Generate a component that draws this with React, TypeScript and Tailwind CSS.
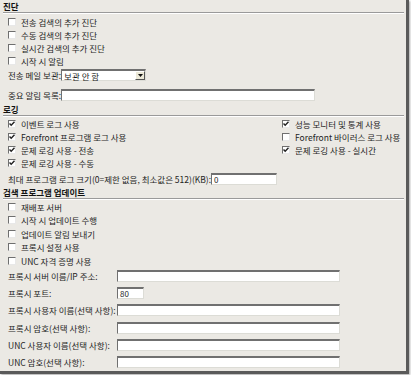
import React from 'react';

const font = { fontFamily: '"Noto Sans CJK KR", "Noto Sans", sans-serif' };

function Check({ checked }: { checked?: boolean }) {
  return (
    <span className="inline-flex w-[8px] h-[8px] shrink-0 bg-white border-t border-l border-[#6f6f6f] border-r border-b border-r-[#e8e8e8] border-b-[#e8e8e8] items-center justify-center">
      {checked && (
        <svg width="6" height="6" viewBox="0 0 6 6">
          <path d="M0.5 2.5 L2.2 4.3 L5.5 0.8" stroke="#222" strokeWidth="1.4" fill="none" />
        </svg>
      )}
    </span>
  );
}

function CheckRow({ label, checked, h = 'h-[13px]' }: { label: string; checked?: boolean; h?: string }) {
  return (
    <div className={`flex items-center gap-[5px] ${h}`}>
      <Check checked={checked} />
      <span className="whitespace-nowrap">{label}</span>
    </div>
  );
}

function Field({ w, value }: { w: string; value?: string }) {
  return (
    <div className={`${w} h-[12px] shrink-0 bg-white border-t-2 border-l border-[#707070] border-r border-b border-r-[#dcdcd6] border-b-[#dcdcd6] flex items-center pl-[2px] text-[8px]`}>
      {value}
    </div>
  );
}

function Header({ title }: { title: string }) {
  return (
    <div className="pl-[3px] pr-[2px]">
      <div className="font-bold text-[8.5px] h-[11px] flex items-center text-[#111]">{title}</div>
      <div className="h-[2px] border-t border-[#9a9a9a] border-b border-b-white mt-[1px]" />
    </div>
  );
}

function FormRow({ label, w = 'w-[223px]', value }: { label: string; w?: string; value?: string }) {
  return (
    <div className="flex items-center h-[17.2px]">
      <span className="w-[109px] whitespace-nowrap">{label}</span>
      <Field w={w} value={value} />
    </div>
  );
}

export default function App() {
  return (
    <div className="w-[411px] h-[375px] bg-white" style={font}>
      <div className="w-[409px] h-[374px] bg-[#ebe9e4] border-r-[3px] border-b-[3px] border-[#5a5a5a] shadow-[1px_1px_2px_rgba(0,0,0,0.35)] text-[8.5px] leading-[10px] text-[#1e1e1e] overflow-hidden">
        {/* 진단 */}
        <Header title="진단" />
        <div className="pl-[8px] pt-[1px]">
          <CheckRow label="전송 검색의 추가 진단" />
          <CheckRow label="수동 검색의 추가 진단" />
          <CheckRow label="실시간 검색의 추가 진단" />
          <CheckRow label="시작 시 알림" />
          <div className="flex items-center h-[16px]">
            <span className="whitespace-nowrap">전송 메일 보관:</span>
            <div className="w-[85px] h-[12px] bg-white border-t-2 border-l border-[#707070] border-r border-b border-r-[#dcdcd6] border-b-[#dcdcd6] flex items-center justify-between pl-[2px]">
              <span>보관 안 함</span>
              <span className="w-[10px] h-[9px] bg-[#ece9d8] border border-t-white border-l-white border-r-[#555] border-b-[#555] flex items-center justify-center">
                <svg width="5" height="3" viewBox="0 0 5 3">
                  <path d="M0 0 H5 L2.5 3 Z" fill="#111" />
                </svg>
              </span>
            </div>
          </div>
          <div className="flex items-center h-[20px] pt-[4px]">
            <span className="whitespace-nowrap">중요 알림 목록:</span>
            <Field w="w-[254px]" />
          </div>
        </div>

        {/* 로깅 */}
        <Header title="로깅" />
        <div className="pl-[8px] grid grid-cols-[274px_1fr]">
          <div>
            <CheckRow label="이벤트 로그 사용" checked />
            <CheckRow label="Forefront 프로그램 로그 사용" checked />
            <CheckRow label="문제 로깅 사용 - 전송" checked />
            <CheckRow label="문제 로깅 사용 - 수동" checked />
          </div>
          <div>
            <CheckRow label="성능 모니터 및 통계 사용" checked />
            <CheckRow label="Forefront 바이러스 로그 사용" />
            <CheckRow label="문제 로깅 사용 - 실시간" checked />
          </div>
        </div>
        <div className="pl-[8px] flex items-center h-[17px] pt-[3px]">
          <span className="whitespace-nowrap">최대 프로그램 로그 크기(0=제한 없음, 최소값은 512)(KB):</span>
          <Field w="w-[66px]" value="0" />
        </div>

        {/* 검색 프로그램 업데이트 */}
        <Header title="검색 프로그램 업데이트" />
        <div className="pl-[8px]">
          <CheckRow label="재배포 서버" h="h-[13.5px]" />
          <CheckRow label="시작 시 업데이트 수행" h="h-[13.5px]" />
          <CheckRow label="업데이트 알림 보내기" h="h-[13.5px]" />
          <CheckRow label="프록시 설정 사용" h="h-[13.5px]" />
          <CheckRow label="UNC 자격 증명 사용" h="h-[13.5px]" />
          <FormRow label="프록시 서버 이름/IP 주소:" />
          <FormRow label="프록시 포트:" w="w-[27px]" value="80" />
          <FormRow label="프록시 사용자 이름(선택 사항):" />
          <FormRow label="프록시 암호(선택 사항):" />
          <FormRow label="UNC 사용자 이름(선택 사항):" />
          <FormRow label="UNC 암호(선택 사항):" />
        </div>
      </div>
    </div>
  );
}
